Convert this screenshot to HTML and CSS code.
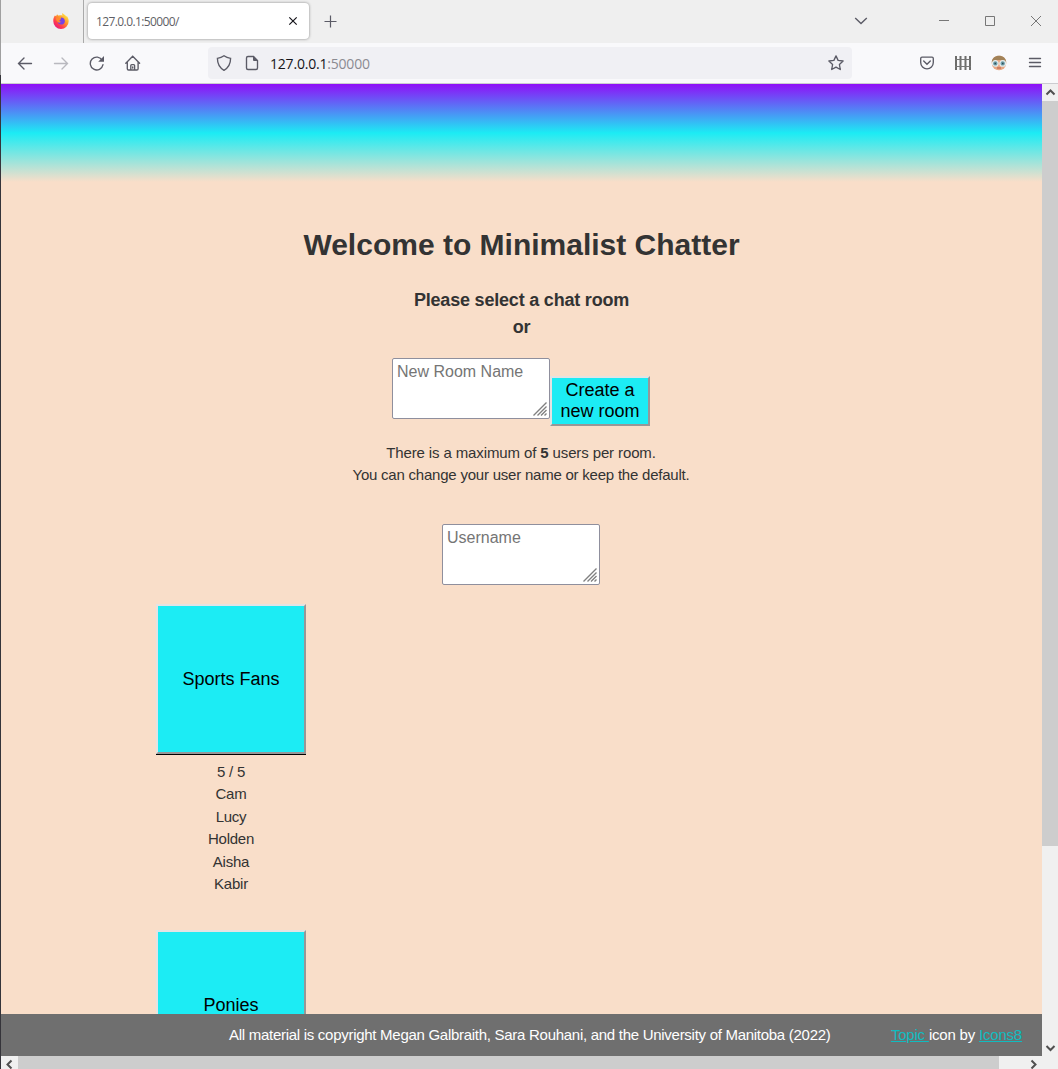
FILE: index.html
```html
<!DOCTYPE html>
<html lang="en">
<head>
<meta charset="utf-8">
<title>Minimalist Chatter</title>
<link rel="stylesheet" href="styles.css">
</head>
<body>
<div class="window">
  <header class="tabbar">
    <div class="pinned">
      <svg width="16" height="16" viewBox="0 0 16 16">
        <defs>
          <linearGradient id="flame" x1="1" y1="0" x2="0.2" y2="1"><stop offset="0.1" stop-color="#fff04a"/><stop offset="0.45" stop-color="#ff9a2a"/><stop offset="0.75" stop-color="#ff3b4e"/><stop offset="1" stop-color="#e31587"/></linearGradient>
        </defs>
        <path fill="url(#flame)" d="M9.600 0c-.7 1.200-.5 2 .2 2.700C8.500 2 7 2.100 6 2.600 5 2.500 4.500 1.900 4.200 1.200c-.6.5-.9 1.200-1 2L1.900 2.500C.7 4.200.2 6 .3 8.200A7.700 7.700 0 0 0 15.700 8.300c.1-2.300-.9-4.400-2.300-5.600l.3 1.200C12.700 2 10.400 1.600 9.600 0z"/>
        <path fill="#7542e5" d="M8 4.500c2.400 0 3.900 1.700 3.900 3.700S10.200 11.600 8.200 11.600 4.700 10.200 4.700 8.500c1 .8 2 .7 2.900.1-1-.3-2-.8-2.200-1.800.5-.7 1.400-.9 2.400-.9C7.900 5.300 8 5 8 4.500z"/>
        <path fill="#ff8b2c" d="M3.200 4.600c1.100-.4 2-.1 2.700.6l1.900.9c-.1.800-1.300 1-1.500 1.800.3.700 1.300.9 2.200.7-1 1.200-2.500 1.300-3.500.6C3.700 8.400 2.600 6.500 3.200 4.600z"/>
      </svg>
    </div>
    <div class="tab">
      <span>127.0.0.1:50000/</span>
      <svg width="10" height="10" viewBox="0 0 10 10"><path d="M1.300 1.300l7.400 7.400M8.700 1.300L1.300 8.700" stroke="#15141a" stroke-width="1.200"/></svg>
    </div>
    <svg class="plus" width="14" height="14" viewBox="0 0 14 14"><path d="M7.500 1.500v12M1.500 7.500h12" stroke="#5b5b66" stroke-width="1.200"/></svg>
    <div class="window-controls">
      <svg width="14" height="10" viewBox="0 0 14 10"><path d="M1.200 2l5.800 5.500L12.800 2" fill="none" stroke="#5b5b66" stroke-width="1.400"/></svg>
      <svg width="12" height="12" viewBox="0 0 12 12"><path d="M1 5.500h10" stroke="#777"/></svg>
      <svg width="12" height="12" viewBox="0 0 12 12"><path d="M1.500 1.500h9v9h-9z" fill="none" stroke="#777"/></svg>
      <svg width="12" height="12" viewBox="0 0 12 12"><path d="M1 1l10 10M11 1L1 11" stroke="#777"/></svg>
    </div>
  </header>

  <nav class="toolbar">
    <div class="nav-icons">
      <svg width="16" height="16" viewBox="0 0 16 16"><path d="M14.500 8.500H1.500M7 3L1.500 8.500 7 14" class="line"/></svg>
      <svg class="disabled" width="16" height="16" viewBox="0 0 16 16"><path d="M1.500 8.500h13M9 3L14.500 8.500 9 14" class="line"/></svg>
      <svg width="16" height="16" viewBox="0 0 16 16"><path d="M13.300 5.400A6.400 6.400 0 1 0 14 9.700" class="line"/><path d="M15 1v5.800H9.200z" fill="#5b5b66"/></svg>
      <svg width="16" height="16" viewBox="0 0 16 16"><path d="M.8 8.200L7.700 1.300l6.900 6.900M2.300 7.200v6.500q0 1.300 1.300 1.300h8.200q1.300 0 1.300-1.300V7.200M5.800 15v-4.500q0-.9.900-.9h2q.9 0 .9.900V15M7.700 12v1" class="line"/></svg>
    </div>
    <div class="urlbar">
      <svg width="16" height="16" viewBox="0 0 16 16"><path d="M8 .8c2 1.500 4 2.200 6.600 2.500 0 5.300-2.200 9.500-6.600 12C3.600 12.800 1.400 8.600 1.400 3.300 4 3 6 2.300 8 .8z" class="line"/></svg>
      <svg width="16" height="16" viewBox="0 0 16 16"><path d="M9.500 1.500H4Q2.500 1.500 2.500 3v10q0 1.500 1.500 1.500h8q1.500 0 1.500-1.500V5.500z" class="line"/><path d="M9 1l5 5H10Q9 6 9 5z" fill="#5b5b66"/></svg>
      <div class="address">127.0.0.1<span>:50000</span></div>
      <svg width="16" height="16" viewBox="0 0 16 16"><path d="M8 .9l2.100 4.500 5 .6-3.700 3.500.9 5L8 12.100l-4.300 2.400.9-5L.9 6l5-.6z" class="line" stroke-linejoin="round"/></svg>
    </div>
    <div class="tools">
      <svg width="16" height="16" viewBox="0 0 16 16"><path d="M3 2.100h10q1.300 0 1.300 1.300v4.100a6.300 6.300 0 0 1-12.600 0V3.400Q1.700 2.100 3 2.100zM4.700 6L8 9.200l3.300-3.200" class="line"/></svg>
      <svg width="16" height="16" viewBox="0 0 16 16"><path d="M1 1v14M5.500 1v14M10.500 1v14M15 1v14" stroke="#6d6d6b" stroke-width="2"/><path d="M0 4.500h16M0 11.500h16" stroke="#777"/></svg>
      <svg width="16" height="16" viewBox="0 0 16 16"><circle cx="8" cy="8" r="7.300" fill="#e8a884"/><path d="M.7 7.500C.8 3 4 .7 8 .7s7.200 2.300 7.300 6.800L12 5H4z" fill="#a28258"/><path d="M6 13h4" stroke="#b85b45"/><circle cx="4.300" cy="8.400" r="2.800" fill="#6b9eaa" stroke="#e8eded" stroke-width="1.200"/><circle cx="11.700" cy="8.400" r="2.800" fill="#6b9eaa" stroke="#e8eded" stroke-width="1.200"/><path d="M3.500 8.400h1.500M11 8.400h1.500" stroke="#304951" stroke-width="1.500"/></svg>
      <svg width="16" height="16" viewBox="0 0 16 16"><path d="M2.500 3.500h11M2.500 7.500h11M2.500 11.500h11" class="line"/></svg>
    </div>
  </nav>

  <div class="viewport">
    <div class="page">
      <main>
        <h1>Welcome to Minimalist Chatter</h1>
        <h2>Please select a chat room<br>or</h2>
        <form class="new-room">
          <div class="field">
            <textarea placeholder="New Room Name"></textarea>
            <svg class="grip" width="14" height="14" viewBox="0 0 14 14"><path d="M.5 13.500l13-13M4.500 13.500l9-9M8 13.500l5.500-5.500M11.500 13.500l2-2" stroke="#808080" stroke-width="1.400"/></svg>
          </div>
          <button type="button">Create a<br>new room</button>
        </form>
        <p class="notice">There is a maximum of <b>5</b> users per room.<br><span class="hint">You can change your user name or keep the default.</span></p>
        <div class="field username">
          <textarea placeholder="Username"></textarea>
          <svg class="grip" width="14" height="14" viewBox="0 0 14 14"><path d="M.5 13.500l13-13M4.500 13.500l9-9M8 13.500l5.500-5.500M11.500 13.500l2-2" stroke="#808080" stroke-width="1.400"/></svg>
        </div>
        <section class="rooms">
          <article class="room">
            <button type="button">Sports Fans</button>
            <ul><li>5 / 5</li><li>Cam</li><li>Lucy</li><li>Holden</li><li>Aisha</li><li>Kabir</li></ul>
          </article>
          <article class="room">
            <button type="button">Ponies</button>
          </article>
        </section>
      </main>
      <footer>
        <span class="copyright">All material is copyright Megan Galbraith, Sara Rouhani, and the University of Manitoba (2022)</span>
        <span class="credit"><a href="#">Topic </a>icon by <a href="#">Icons8</a></span>
      </footer>
    </div>
    <div class="vscroll">
      <svg width="16" height="17" viewBox="0 0 16 17"><path d="M4.500 10.500L8.500 6.500l4 4" class="arrow"/></svg>
      <div class="vthumb"></div>
      <svg width="16" height="17" viewBox="0 0 16 17"><path d="M4.500 7L8.500 11l4-4" class="arrow"/></svg>
    </div>
    <div class="hscroll">
      <svg width="17" height="13" viewBox="0 0 17 13"><path d="M10.500 4.500L6.500 8.500l4 4" class="arrow"/></svg>
      <div class="hthumb"></div>
      <svg width="17" height="13" viewBox="0 0 17 13"><path d="M6.500 4.500L10.500 8.500l-4 4" class="arrow"/></svg>
    </div>
  </div>
</div>
</body>
</html>
```
FILE: styles.css
```css
* { box-sizing: border-box; }
body { margin: 0; overflow: hidden; font-family: "Liberation Sans", Arial, sans-serif; }
svg { display: block; flex: none; }
.line { fill: none; stroke: #5b5b66; stroke-width: 1.35; stroke-linecap: round; }
.arrow { fill: none; stroke: #505050; stroke-width: 2; }

.window {
  display: grid;
  grid-template-rows: 43px 41px 1fr;
  width: 1058px;
  height: 1069px;
  padding-left: 1px;
  background: linear-gradient(#a0a0a0 75px, #35343a 75px);
}

.tabbar { display: flex; align-items: center; padding-bottom: 1px; background: #efefef; }
.pinned { display: flex; align-items: center; justify-content: flex-end; align-self: flex-start; width: 83px; height: 43px; padding: 0 14px 1px 0; border-right: 1px solid #aaa; }
.tab {
  display: flex;
  align-items: center;
  justify-content: space-between;
  width: 221px;
  height: 36px;
  margin: 0 14px 0 4px;
  padding: 0 11px 0 8px;
  border-radius: 4px;
  background: #fff;
  box-shadow: 0 0 3px rgba(0, 0, 0, .45);
  font: 12px "Open Sans", "Noto Sans", sans-serif;
  letter-spacing: -.6px;
  color: #5f5f66;
}
.window-controls { display: flex; align-items: center; gap: 34px; margin-left: auto; padding-right: 16px; }
.window-controls svg:first-child { margin-right: 36px; }

.toolbar { display: flex; align-items: center; background: #f9f9fb; border-bottom: 1px solid #ccccd0; }
.nav-icons { display: flex; gap: 20px; width: 207px; padding-left: 16px; }
.disabled { opacity: .4; }
.urlbar { display: flex; align-items: center; gap: 12px; width: 644px; height: 32px; padding: 0 8px; border-radius: 4px; background: #f0f0f4; }
.address { flex: 1; margin-left: -2px; font: 14px "Open Sans", "Noto Sans", sans-serif; letter-spacing: -.2px; color: #15141a; }
.address span { color: #8b8b92; }
.tools { display: flex; gap: 20px; margin-left: auto; padding-right: 15px; }

.viewport { display: grid; grid-template-columns: 1041px 16px; grid-template-rows: 972px 13px; }
.page {
  display: grid;
  grid-template-rows: 930px 42px;
  background: #f9dec9 linear-gradient(#8f0ff7, #1cecf4 50%, #f9dec9) no-repeat 0 0 / 100% 98px;
}
main { display: flex; flex-direction: column; align-items: center; overflow: hidden; padding-top: 143px; color: #333; text-align: center; }
main > * { flex-shrink: 0; }
h1 { margin: 0; font-size: 30px; line-height: 36px; }
h2 { margin: 24px 0 17px; font-size: 18px; line-height: 27px; letter-spacing: -.2px; }
.new-room { display: flex; align-items: flex-end; height: 68px; margin-right: 1px; }
.new-room .field { align-self: flex-start; }
.field { position: relative; width: 158px; height: 61px; }
.username { margin-right: 1px; }
textarea {
  display: block;
  width: 100%;
  height: 100%;
  padding: 2px 4px;
  border: 1px solid #8f8f9d;
  border-radius: 2px;
  resize: none;
  font: 16px/21px "Liberation Sans", Arial, sans-serif;
}
textarea::placeholder { color: #757575; }
.grip { position: absolute; right: 3px; bottom: 3px; }
button {
  padding: 0;
  border: 2px solid;
  border-color: #e3e3e3 #979797 #979797 #e3e3e3;
  background: #1cecf4;
  color: #000;
  font: 18px/21px "Liberation Sans", Arial, sans-serif;
}
.new-room button { width: 100px; height: 50px; }
.notice { margin: 16px 1px 37.200px 0; font-size: 15px; line-height: 22.400px; letter-spacing: -.12px; }
.hint { letter-spacing: -.22px; }
.rooms { display: flex; flex-direction: column; gap: 34.900px; align-self: flex-start; margin: 19px 0 0 155px; }
.room { width: 150px; }
.room button { display: block; width: 150px; height: 150px; }
.room ul { margin: 0; padding: 6px 0 0; border-top: 1px solid #000; list-style: none; font-size: 15px; line-height: 22.400px; letter-spacing: -.25px; }

footer { display: flex; align-items: center; justify-content: space-between; padding: 0 20px 1px 228px; background: #6f6f6f; color: #fff; font-size: 15px; letter-spacing: -.2px; }
footer a { color: #0fbcc0; }
.copyright { letter-spacing: -.28px; }
.credit { white-space: pre; }

.vscroll { display: flex; flex-direction: column; grid-row: 1; grid-column: 2; background: #f0f0f0; }
.vthumb { height: 745px; margin-bottom: auto; background: #cdcdcd; }
.hscroll { display: flex; grid-column: 1 / 3; background: #f0f0f0; }
.hthumb { width: 981px; background: #cdcdcd; }
.hscroll svg:last-child { margin-left: 26px; }
```
